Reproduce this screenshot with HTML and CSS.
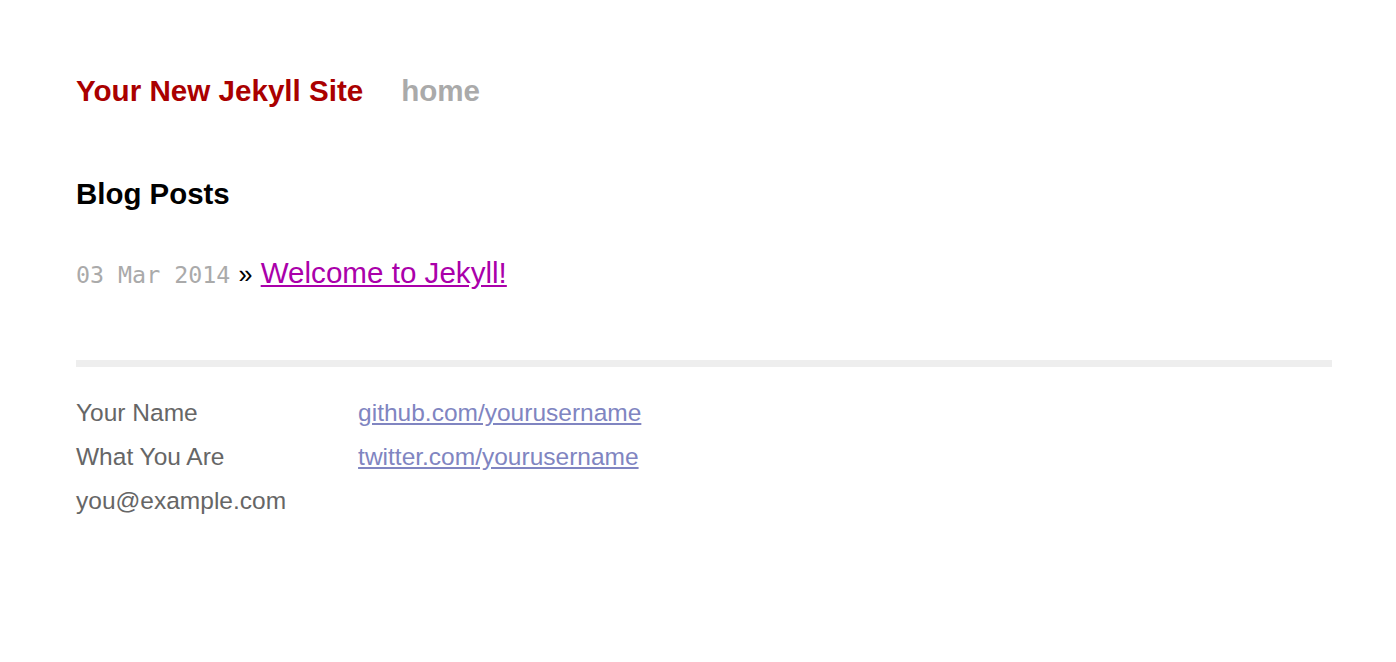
FILE: index.html
```
<!DOCTYPE html>
<html>
<head>
<meta charset="utf-8">
<title>Your New Jekyll Site</title>
<link rel="stylesheet" href="styles.css">
</head>
<body>
<div class="site">
  <div class="header">
    <a class="title" href="#">Your New Jekyll Site</a>
    <a class="extra" href="#">home</a>
  </div>
  <h1 class="heading">Blog Posts</h1>
  <ul class="posts">
    <li><span class="date">03 Mar 2014</span> <span class="sep">&raquo;</span> <a class="post-link" href="#">Welcome to Jekyll!</a></li>
  </ul>
  <div class="footer">
    <div class="contact">
      <p>Your Name<br>What You Are<br>you@example.com</p>
    </div>
    <div class="contact">
      <p><a href="#">github.com/yourusername</a><br><a href="#">twitter.com/yourusername</a></p>
    </div>
  </div>
</div>
</body>
</html>
```
FILE: styles.css
```
html, body {
  margin: 0;
  padding: 0;
  background: #fff;
}
body {
  font-family: "Liberation Sans", Arial, Helvetica, sans-serif;
  color: #000;
}
.site {
  font-size: 29.6px;
  line-height: 44px;
  width: 1256px;
  margin: 0 0 0 76px;
  padding-top: 69px;
}
.header {
  height: 103px;
}
.header a {
  font-weight: bold;
  text-decoration: none;
}
.title {
  color: #a00;
}
.extra {
  color: #aaa;
  margin-left: 1em;
}
.heading {
  font-size: 29.44px;
  line-height: 44px;
  margin: 0;
  font-weight: bold;
}
.posts {
  list-style: none;
  margin: 35px 0 0 0;
  padding: 0;
}
.date {
  color: #aaa;
  font-family: "DejaVu Sans Mono", "Liberation Mono", monospace;
  font-size: 23.3px;
}
.sep {
  font-size: 25px;
}
.post-link {
  color: #a0a;
  text-decoration: underline;
}
.footer {
  font-size: 24.5px;
  color: #666;
  border-top: 7px solid #eee;
  margin-top: 63px;
  padding-top: 24px;
  display: flex;
  gap: 72px;
}
.footer p {
  margin: 0;
}
.footer a {
  color: #8085c1;
  text-decoration: underline;
}
```
